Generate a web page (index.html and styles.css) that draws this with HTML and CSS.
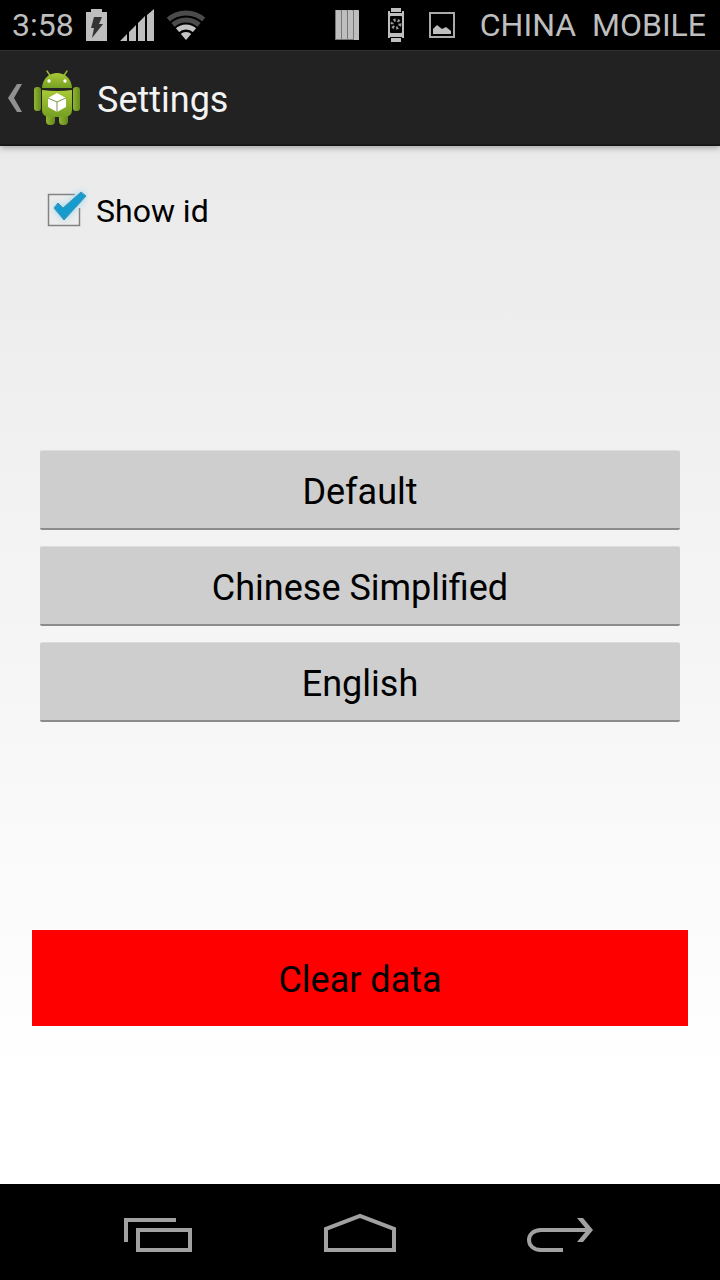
FILE: index.html
```html
<!DOCTYPE html>
<html lang="en">
<head>
<meta charset="utf-8">
<meta name="viewport" content="width=device-width, initial-scale=1">
<title>Settings</title>
<link rel="stylesheet" href="styles.css">
</head>
<body>
<div class="screen">
  <div class="status-bar">
    <div class="status-group status-left">
      <span class="clock">3:58</span>
      <svg class="battery" width="22" height="32" viewBox="0 0 22 32" aria-hidden="true">
        <path fill="#bebebe" d="M0 3h5V0h11v3h5v29H0z"/>
        <path fill="#333" d="M8 8h8l-3 7h4L6 29l2-10H5z"/>
      </svg>
      <svg class="signal" width="34" height="32" viewBox="0 0 34 32" aria-hidden="true">
        <path fill="#bebebe" d="M0 32l7-7v7zM9 23l7-7v16H9zM18 14l7-7v25h-7zM27 6l7-6v32h-7z"/>
      </svg>
      <svg class="wifi" width="40" height="30" viewBox="0 0 40 30" aria-hidden="true">
        <defs><clipPath id="wedge"><path d="M20 30L-4 2V-4h48v6z"/></clipPath></defs>
        <g clip-path="url(#wedge)" fill="none">
          <circle cx="20" cy="30" r="27" stroke="#4b4b4b" stroke-width="5"/>
          <circle cx="20" cy="30" r="20" stroke="#4b4b4b" stroke-width="5"/>
          <circle cx="20" cy="30" r="13" stroke="#c4c4c4" stroke-width="5"/>
          <circle cx="20" cy="30" r="8" fill="#c4c4c4"/>
        </g>
      </svg>
    </div>
    <div class="status-group status-right">
      <svg class="bars" width="28" height="30" viewBox="0 0 28 30" aria-hidden="true">
        <path fill="#777" d="M0 0h24v30H0z"/>
        <path fill="#bebebe" d="M1 0h4l1 1v28H1zM7 0h4l1 1v28H7zM13 0h4l1 1v28h-5zM19 0h4l1 1v29h-5z"/>
      </svg>
      <svg class="watch" width="16" height="34" viewBox="0 0 16 34" aria-hidden="true">
        <path fill="#bebebe" d="M3 0h10v4H3zM3 30h10v4H3zM0 3h2v2h12V3h2v27h-2v-1H2v1H0z"/>
        <rect x="2" y="8" width="12" height="17" rx="1" fill="#000"/>
        <circle cx="8" cy="16" r="4" fill="none" stroke="#999" stroke-width="3" stroke-dasharray="2 2"/>
      </svg>
      <svg class="picture" width="26" height="26" viewBox="0 0 26 26" aria-hidden="true">
        <rect x="1" y="1" width="24" height="24" fill="none" stroke="#aaa" stroke-width="2"/>
        <path fill="#bebebe" d="M4 22v-5l4-4 5 4 4-2 5 4v3z"/>
      </svg>
      <span class="carrier">CHINA  MOBILE</span>
    </div>
  </div>

  <header class="action-bar">
    <a class="up" href="#" aria-label="Navigate up">
      <svg width="14" height="28" viewBox="0 0 14 28" aria-hidden="true">
        <path fill="#919191" d="M9 0h5L6 14l8 14H9L0 14z"/>
      </svg>
      <svg class="robot" width="48" height="58" viewBox="0 0 48 58" aria-hidden="true">
        <defs>
          <linearGradient id="skin" x1="0" y1="0" x2="0" y2="1">
            <stop offset="0" stop-color="#a9ca38"/>
            <stop offset="1" stop-color="#76a022"/>
          </linearGradient>
          <linearGradient id="limb" x1="0" y1="0" x2="1" y2="0">
            <stop offset="0" stop-color="#91b52e"/>
            <stop offset="1" stop-color="#64891d"/>
          </linearGradient>
        </defs>
        <path d="M13 2l4 6M33 2l-4 6" stroke="#94b933" stroke-width="1.5" stroke-linecap="round"/>
        <rect x="12" y="42" width="9" height="14" rx="4" fill="url(#limb)"/>
        <rect x="25" y="42" width="9" height="14" rx="4" fill="url(#limb)"/>
        <rect x="0" y="18" width="7" height="24" rx="3" fill="url(#limb)"/>
        <rect x="39" y="18" width="7" height="24" rx="3" fill="url(#limb)"/>
        <path fill="url(#skin)" d="M8 19C9-1 37-1 38 19z"/>
        <path fill="url(#skin)" d="M8 21q15 2 30 0v20q0 7-8 7H16q-8 0-8-7z"/>
        <circle cx="15" cy="12" r="1.7" fill="#fff"/>
        <circle cx="31" cy="12" r="1.700" fill="#fff"/>
        <path fill="#fff" d="M23 24l9 5v9l-9 5-9-5v-9z"/>
        <path fill="none" stroke="#789647" stroke-width="1" d="M14 29l9 4 9-4M23 33v10"/>
      </svg>
    </a>
    <h1 class="title">Settings</h1>
  </header>

  <main class="content">
    <label class="check-row">
      <span class="check">
        <input class="check-input" type="checkbox" checked>
        <svg class="check-art" width="48" height="48" viewBox="0 0 48 48" aria-hidden="true">
          <path class="check-box" d="M35 8.500H8.500v31h31V22"/>
          <path class="check-mark" d="M14 22l4-5 5 5L41 6l5 4-22 24z"/>
        </svg>
      </span>
      <span class="check-text">Show id</span>
    </label>

    <div class="languages">
      <button class="button" type="button">Default</button>
      <button class="button" type="button">Chinese Simplified</button>
      <button class="button" type="button">English</button>
    </div>

    <button class="clear" type="button">Clear data</button>
  </main>

  <nav class="nav-bar">
    <button class="nav-button" type="button" aria-label="Recent apps">
      <svg width="96" height="96" viewBox="0 0 96 96"><path d="M14 58V36h50M26 46h52v20H26z"/></svg>
    </button>
    <button class="nav-button" type="button" aria-label="Home">
      <svg width="96" height="96" viewBox="0 0 96 96"><path d="M14 66V45l34-13 34 13v21z"/></svg>
    </button>
    <button class="nav-button" type="button" aria-label="Back">
      <svg width="96" height="96" viewBox="0 0 96 96"><path d="M51 66H29c-16 0-16-20 0-20h50"/><path class="nav-tip" d="M65 34h6l10 12-10 12h-6l10-12z"/></svg>
    </button>
  </nav>
</div>
</body>
</html>
```
FILE: styles.css
```css
* { box-sizing: border-box; }

body {
  margin: 0;
  font-family: Roboto, "Liberation Sans", sans-serif;
  background: #000;
}

svg { display: block; flex: none; }

.screen {
  display: flex;
  flex-direction: column;
  min-height: 100vh;
}

.status-bar {
  display: flex;
  justify-content: space-between;
  align-items: center;
  height: 50px;
  padding: 0 14px 0 12px;
  background: #000;
  color: #bebebe;
  font-size: 32px;
}

.status-group { display: flex; align-items: center; }
.status-left { gap: 12px; }
.status-right { gap: 25px; }
.carrier { white-space: pre; }

.action-bar {
  display: flex;
  align-items: center;
  gap: 15px;
  height: 96px;
  padding: 0 8px;
  background: #222;
  border-top: 1px solid #303030;
  border-bottom: 2px solid #181818;
  box-shadow: 0 2px 6px rgba(0, 0, 0, 0.3);
  z-index: 1;
}

.up { display: flex; align-items: center; gap: 12px; }

.title {
  margin: 0;
  padding-top: 4px;
  color: #f3f3f3;
  font-size: 36px;
  font-weight: 400;
}

.content {
  display: flex;
  flex: 1;
  flex-direction: column;
  padding: 40px 32px 158px;
  background: linear-gradient(#eaeaea, #fff 90%);
  color: #000;
}

.check-row {
  display: flex;
  align-items: center;
  align-self: flex-start;
  gap: 8px;
  padding-left: 8px;
  font-size: 32px;
}

.check { display: grid; }
.check-text { padding-top: 2px; }
.check-input, .check-art { grid-area: 1 / 1; }

.check-input {
  appearance: none;
  width: 48px;
  height: 48px;
  margin: 0;
}

.check-art { pointer-events: none; }
.check-box { fill: none; stroke: #828282; stroke-width: 1.5; }

.check-mark {
  fill: #159bce;
  stroke: #4b91ad;
  stroke-width: 1;
  filter: drop-shadow(0 0 3px #8cd8f4);
  visibility: hidden;
}

.check-input:checked + .check-art .check-mark { visibility: visible; }

.languages {
  display: grid;
  gap: 16px;
  margin: auto 0;
  padding: 8px 8px 0;
}

.button, .clear {
  border: 0;
  color: #000;
  font-family: inherit;
  font-size: 36px;
}

.button {
  height: 80px;
  padding: 4px 0 0;
  border-top: 1px solid #dcdcdc;
  border-bottom: 2px solid #8c8c8c;
  border-radius: 2px;
  background: #cecece;
}

.clear {
  height: 96px;
  padding: 4px 0 0;
  background: #f00;
}

.nav-bar {
  display: flex;
  justify-content: center;
  height: 96px;
  background: #000;
}

.nav-button {
  display: flex;
  justify-content: center;
  flex: 0 1 200px;
  padding: 0;
  border: 0;
  background: none;
}

.nav-button path { fill: none; stroke: #a1a1a1; stroke-width: 4; }
.nav-button .nav-tip { fill: #a1a1a1; stroke: none; }
```
